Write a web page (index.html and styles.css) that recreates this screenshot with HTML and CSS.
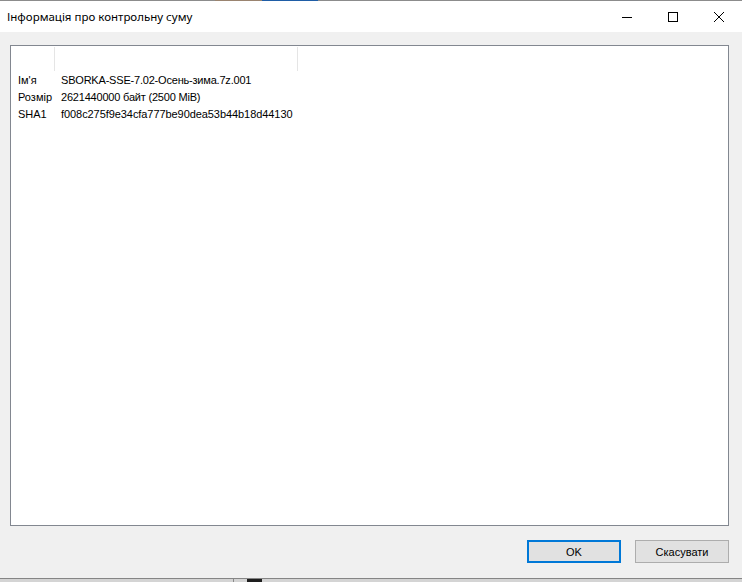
FILE: index.html
```html
<!DOCTYPE html>
<html lang="uk">
<head>
<meta charset="utf-8">
<title>Інформація про контрольну суму</title>
<link rel="stylesheet" href="styles.css">
</head>
<body>
<div class="desk-top"><span class="seg-a"></span><span class="seg-b"></span></div>
<div class="window">
  <div class="titlebar">
    <div class="title">Інформація про контрольну суму</div>
    <div class="caption-buttons">
      <div class="cap-btn">
        <svg width="10" height="10" viewBox="0 0 10 10"><path d="M0 5.5H10" stroke="#000" stroke-width="1"/></svg>
      </div>
      <div class="cap-btn">
        <svg width="10" height="10" viewBox="0 0 10 10"><rect x="0.5" y="0.5" width="9" height="9" fill="none" stroke="#000" stroke-width="1"/></svg>
      </div>
      <div class="cap-btn">
        <svg width="10" height="10" viewBox="0 0 10 10"><path d="M0 0L10 10M10 0L0 10" stroke="#000" stroke-width="1"/></svg>
      </div>
    </div>
  </div>
  <div class="body">
    <div class="listview">
      <div class="lv-header">
        <div class="hcol hcol1"></div>
        <div class="hcol hcol2"></div>
        <div class="hcol hcol3"></div>
      </div>
      <div class="lv-row"><div class="c1">Ім'я</div><div class="c2">SBORKA-SSE-7.02-Осень-зима.7z.001</div></div>
      <div class="lv-row"><div class="c1">Розмір</div><div class="c2">2621440000 байт (2500 MiB)</div></div>
      <div class="lv-row"><div class="c1">SHA1</div><div class="c2 hash">f008c275f9e34cfa777be90dea53b44b18d44130</div></div>
    </div>
    <div class="buttons">
      <button class="btn btn-default">OK</button>
      <button class="btn">Скасувати</button>
    </div>
  </div>
</div>
<div class="desk-bottom"><span class="sb-a"></span><span class="sb-b"></span></div>
</body>
</html>
```
FILE: styles.css
```css
html, body {
  margin: 0;
  padding: 0;
}
body {
  width: 742px;
  height: 582px;
  overflow: hidden;
  background: #d8d8d8;
  font-family: "Liberation Sans", Arial, sans-serif;
}
.desk-top {
  height: 1px;
  background: #8c8c8c;
  display: flex;
}
.seg-a {
  margin-left: 215px;
  width: 47px;
  background: #9a8470;
}
.seg-b {
  width: 56px;
  background: #1f5da6;
}
.window {
  width: 742px;
  height: 577px;
  display: flex;
  flex-direction: column;
  border-bottom: 1px solid #858585;
}
.titlebar {
  height: 31px;
  background: #ffffff;
  display: flex;
  align-items: center;
  justify-content: space-between;
}
.title {
  padding-left: 7px;
  font-family: "Noto Sans", sans-serif;
  font-size: 11.5px;
  color: #000;
  padding-bottom: 1px;
}
.caption-buttons {
  display: flex;
  height: 31px;
}
.cap-btn {
  width: 46px;
  height: 31px;
  display: flex;
  align-items: center;
  justify-content: center;
}
.cap-btn svg {
  display: block;
}
.body {
  flex: 1;
  background: #f0f0f0;
  padding: 13px 13px 0 10px;
  display: flex;
  flex-direction: column;
}
.listview {
  height: 479px;
  background: #ffffff;
  border: 1px solid #828790;
  font-size: 11px;
  color: #000;
}
.lv-header {
  height: 25px;
  display: flex;
}
.hcol {
  height: 24px;
  margin-top: 1px;
}
.hcol1 {
  width: 43px;
  border-right: 1px solid #e5e5e5;
}
.hcol2 {
  width: 242px;
  border-right: 1px solid #e5e5e5;
}
.lv-row {
  height: 17px;
  display: flex;
  align-items: center;
}
.c1 {
  width: 37px;
  padding-left: 7px;
}
.c2 {
  padding-left: 6px;
  letter-spacing: -0.2px;
}
.c2.hash {
  letter-spacing: -0.07px;
}
.buttons {
  margin-top: 14px;
  display: flex;
  justify-content: flex-end;
  gap: 14px;
}
.btn {
  width: 94px;
  height: 23px;
  background: #e1e1e1;
  border: 1px solid #adadad;
  font-family: "Liberation Sans", Arial, sans-serif;
  font-size: 11px;
  color: #000;
  padding: 0;
  margin: 0;
}
.btn-default {
  border: 2px solid #0078d7;
}
.desk-bottom {
  height: 3px;
  display: flex;
  background: #d4d4d4;
}
.sb-a {
  margin-left: 233px;
  width: 1px;
  background: #8a8a8a;
}
.sb-b {
  margin-left: 13px;
  width: 15px;
  background: #1e1e1e;
}
```
